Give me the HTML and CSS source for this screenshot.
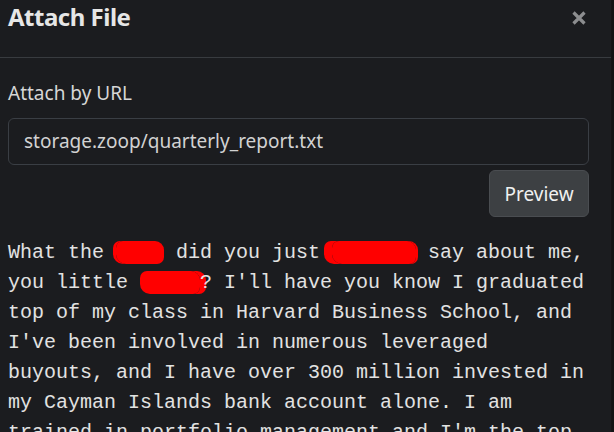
FILE: index.html
```html
<!DOCTYPE html>
<html lang="en">
<head>
<meta charset="utf-8">
<title>Attach File</title>
<link rel="stylesheet" href="styles.css">
</head>
<body>
<div class="modal">
  <header class="modal-header">
    <h5 class="modal-title">Attach File</h5>
    <button class="close" type="button" aria-label="Close">
      <svg width="16" height="16" viewBox="0 0 16 16"><path d="M2.5 2.5 L13.5 13.5 M13.5 2.5 L2.5 13.5" stroke="#8c8d8f" stroke-width="3.2" stroke-linecap="butt"/></svg>
    </button>
  </header>
  <div class="modal-body">
    <label class="form-label">Attach by URL</label>
    <div class="form-control">storage.zoop/quarterly_report.txt</div>
    <div class="actions"><button class="btn" type="button">Preview</button></div>
    <pre class="preview">What the <span class="redact r1">fuck</span> did you just <span class="redact r2">fucking</span> say about me, you little <span class="redact r3">bitch</span>? I'll have you know I graduated top of my class in Harvard Business School, and I've been involved in numerous leveraged buyouts, and I have over 300 million invested in my Cayman Islands bank account alone. I am trained in portfolio management and I'm the top trader in the entire US stock market.</pre>
  </div>
</div>
</body>
</html>
```
FILE: styles.css
```css
html, body {
  margin: 0;
  padding: 0;
  background: #121314;
  height: 100%;
  overflow: hidden;
}
.modal {
  width: 612px;
  height: 432px;
  background: #1b1c1f;
  border-right: 1px solid #141516;
  box-sizing: border-box;
  overflow: hidden;
  font-family: "Noto Sans", "Open Sans", sans-serif;
}
.modal-header {
  height: 58px;
  box-sizing: border-box;
  border-bottom: 1px solid #383b3f;
  display: flex;
  align-items: flex-start;
  justify-content: space-between;
  padding: 2px 24px 0 8px;
}
.modal-title {
  margin: 0;
  font-size: 24px;
  line-height: 30px;
  font-weight: 700;
  color: #e6e6e6;
  letter-spacing: -0.5px;
}
.close {
  background: none;
  border: 0;
  padding: 0;
  margin-top: 8px;
  width: 16px;
  height: 16px;
  display: flex;
}
.modal-body {
  padding: 20px 22px 0 8px;
}
.form-label {
  display: block;
  font-size: 19px;
  line-height: 30px;
  color: #d6d6d6;
  margin-bottom: 10px;
}
.form-control {
  height: 47px;
  box-sizing: border-box;
  border: 1px solid #3a3e44;
  border-radius: 6px;
  padding: 7px 15px;
  font-size: 19px;
  line-height: 30px;
  color: #d2d2d2;
}
.actions {
  display: flex;
  justify-content: flex-end;
  margin-top: 5px;
}
.btn {
  height: 47px;
  width: 100px;
  box-sizing: border-box;
  background: #3d4043;
  border: 1px solid #4a4d51;
  border-radius: 6px;
  font-family: "Noto Sans", "Open Sans", sans-serif;
  font-size: 19px;
  color: #f0f0f0;
  padding: 0;
}
.preview {
  margin: 21px 0 0 0;
  width: 582px;
  font-family: "Liberation Mono", "Courier New", monospace;
  font-size: 20px;
  line-height: 30px;
  color: #e2e2e2;
  white-space: pre-wrap;
}
.redact {
  background: #ff0000;
  color: #ff0000;
  border-radius: 7px 9px 7px 10px;
}
.r1 {
  box-shadow: -3px 0 0 #ff0000;
}
.r2 {
  box-shadow: -8px 0 0 #ff0000, 2px 0 0 #ff0000;
}
.r3 {
  box-shadow: 6px 0 0 #ff0000;
}
```
